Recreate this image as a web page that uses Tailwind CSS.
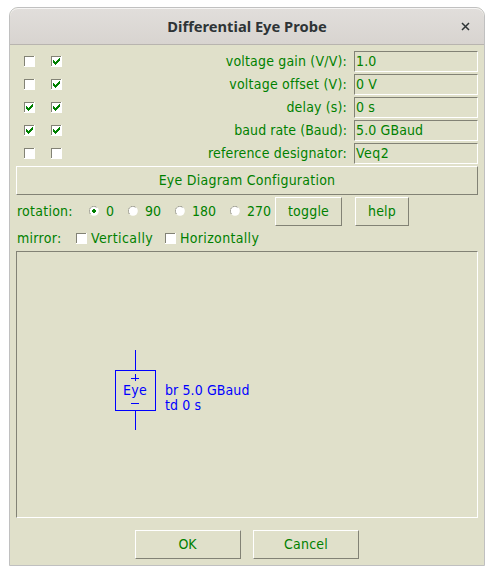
<!DOCTYPE html>
<html lang="en">
<head>
<meta charset="utf-8">
<title>Differential Eye Probe</title>
<script src="https://cdn.jsdelivr.net/npm/@tailwindcss/browser@4"></script>
</head>
<body class="bg-white w-[494px] h-[575px] overflow-hidden pt-[7px] pl-[9px]">
<svg class="hidden">
  <symbol id="box" viewBox="0 0 11 11" shape-rendering="crispEdges">
    <path d="M0 0h11v11H0z" fill="#fff"/><path d="M0 0h10v1H1v9H0z" fill="#828275"/>
  </symbol>
  <symbol id="checked" viewBox="0 0 11 11" shape-rendering="crispEdges">
    <use href="#box"/><path d="M8 2h1v3H8v1H7v1H6v1H5v1H4V8H3V7H2V4h1v1h1v1h1V5h1V4h1V3h1z" fill="#008000"/>
  </symbol>
  <symbol id="radio" viewBox="0 0 11 11">
    <circle cx="5" cy="5" r="4.8" fill="#fff"/><path d="M1.6 8.1A4.5 4.5 0 0 1 8.2 1.8" fill="none" stroke="#828275" stroke-dasharray="2 .7"/>
  </symbol>
</svg>
<main class="w-[476px] h-[559px] border border-[#c0c0c0] rounded-t-[9px] bg-[#e0e0ca] overflow-hidden text-[#008000] text-[14px] leading-[17px] font-['DejaVu_Sans_Condensed','DejaVu_Sans',sans-serif] [font-stretch:condensed]">
  <header class="h-[37px] relative flex items-center justify-center border-b border-[#b8b4af] bg-linear-to-b from-[#e1dedb] to-[#d8d4d0] shadow-[inset_0_1px_0_#f6f5f4] rounded-t-[8px]">
    <h1 class="font-['Noto_Sans',sans-serif] [font-stretch:normal] font-bold text-[14.7px] text-[#2e3436] whitespace-nowrap">Differential Eye Probe</h1>
    <svg class="absolute left-[451px] top-[14px]" width="9" height="9" viewBox="0 0 9 9"><path d="M1 1l7 7M8 1L1 8" stroke="#2e3436" stroke-width="1.5"/></svg>
  </header>
  <div class="px-[6px] pt-[6px]">
    <div class="flex flex-col gap-[2px]">
      <div class="h-[21px] flex items-center"><svg class="ml-[8px] mr-[16px]" width="11" height="11"><use href="#box"/></svg><svg width="11" height="11"><use href="#checked"/></svg><label class="ml-auto mr-[7px] tracking-[0.18px]">voltage gain (V/V):</label><div class="w-[124px] h-[21px] pl-[1px] pt-px tracking-[0.12px] border border-t-[#828275] border-l-[#828275] border-r-white border-b-white">1.0</div></div>
      <div class="h-[21px] flex items-center"><svg class="ml-[8px] mr-[16px]" width="11" height="11"><use href="#box"/></svg><svg width="11" height="11"><use href="#checked"/></svg><label class="ml-auto mr-[7px] tracking-[0.22px]">voltage offset (V):</label><div class="w-[124px] h-[21px] pl-[1px] pt-px tracking-[0.12px] border border-t-[#828275] border-l-[#828275] border-r-white border-b-white">0 V</div></div>
      <div class="h-[21px] flex items-center"><svg class="ml-[8px] mr-[16px]" width="11" height="11"><use href="#checked"/></svg><svg width="11" height="11"><use href="#checked"/></svg><label class="ml-auto mr-[7px] tracking-[0.15px]">delay (s):</label><div class="w-[124px] h-[21px] pl-[1px] pt-px tracking-[0.12px] border border-t-[#828275] border-l-[#828275] border-r-white border-b-white">0 s</div></div>
      <div class="h-[21px] flex items-center"><svg class="ml-[8px] mr-[16px]" width="11" height="11"><use href="#checked"/></svg><svg width="11" height="11"><use href="#checked"/></svg><label class="ml-auto mr-[7px] tracking-[0.06px]">baud rate (Baud):</label><div class="w-[124px] h-[21px] pl-[1px] pt-px tracking-[0.12px] border border-t-[#828275] border-l-[#828275] border-r-white border-b-white">5.0 GBaud</div></div>
      <div class="h-[21px] flex items-center"><svg class="ml-[8px] mr-[16px]" width="11" height="11"><use href="#box"/></svg><svg width="11" height="11"><use href="#box"/></svg><label class="ml-auto mr-[7px] tracking-[0.17px]">reference designator:</label><div class="w-[124px] h-[21px] pl-[1px] pt-px tracking-[0.5px] border border-t-[#828275] border-l-[#828275] border-r-white border-b-white">Veq2</div></div>
    </div>
    <button class="block mt-[2px] w-full h-[29px] tracking-[0.24px] border border-t-white border-l-white border-r-[#828275] border-b-[#828275]">Eye Diagram Configuration</button>
    <div class="mt-[2px] h-[29px] flex items-center">
      <span class="w-[73px] pl-px tracking-[0.25px]">rotation:</span>
      <label class="flex items-center gap-[6px] w-[39px]"><svg width="11" height="11"><use href="#radio"/><path d="M4 3h2v1h1v2H6v1H4V6H3V4h1z" fill="#008000" shape-rendering="crispEdges"/></svg>0</label>
      <label class="flex items-center gap-[6px] w-[47px]"><svg width="11" height="11"><use href="#radio"/></svg>90</label>
      <label class="flex items-center gap-[6px] w-[55px]"><svg width="11" height="11"><use href="#radio"/></svg>180</label>
      <label class="flex items-center gap-[6px] w-[45px]"><svg width="11" height="11"><use href="#radio"/></svg>270</label>
      <button class="w-[67px] h-[29px] tracking-[0.2px] border border-t-white border-l-white border-r-[#828275] border-b-[#828275]">toggle</button>
      <button class="ml-[13px] w-[54px] h-[29px] tracking-[0.2px] border border-t-white border-l-white border-r-[#828275] border-b-[#828275]">help</button>
    </div>
    <div class="h-[25px] flex items-center">
      <span class="w-[60px] pl-px tracking-[0.3px]">mirror:</span>
      <label class="flex items-center gap-[4px] w-[89px] tracking-[0.42px]"><svg width="11" height="11"><use href="#box"/></svg>Vertically</label>
      <label class="flex items-center gap-[4px] tracking-[0.33px]"><svg width="11" height="11"><use href="#box"/></svg>Horizontally</label>
    </div>
    <div class="h-[267px] border border-t-[#828275] border-l-[#828275] border-r-white border-b-white">
      <svg class="block" width="460" height="265" viewBox="17 252 460 265">
        <path d="M135.5 350v20M135.5 411v19M115.5 370.5h40v40h-40zM131 378.5h8M135.5 374v7M131 403.5h8" fill="none" stroke="#0000ff" shape-rendering="crispEdges"/>
        <g fill="#0000ff" class="tracking-[0.1px]"><text x="123" y="395" class="tracking-[0.35px]">Eye</text><text x="165" y="395">br 5.0 GBaud</text><text x="165" y="410">td 0 s</text></g>
      </svg>
    </div>
    <div class="mt-[12px] ml-[119px] flex gap-[12px]">
      <button class="w-[106px] h-[29px] border border-t-white border-l-white border-r-[#828275] border-b-[#828275] pr-[1px]">OK</button>
      <button class="w-[106px] h-[29px] tracking-[0.2px] border border-t-white border-l-white border-r-[#828275] border-b-[#828275]">Cancel</button>
    </div>
  </div>
</main>
</body>
</html>
